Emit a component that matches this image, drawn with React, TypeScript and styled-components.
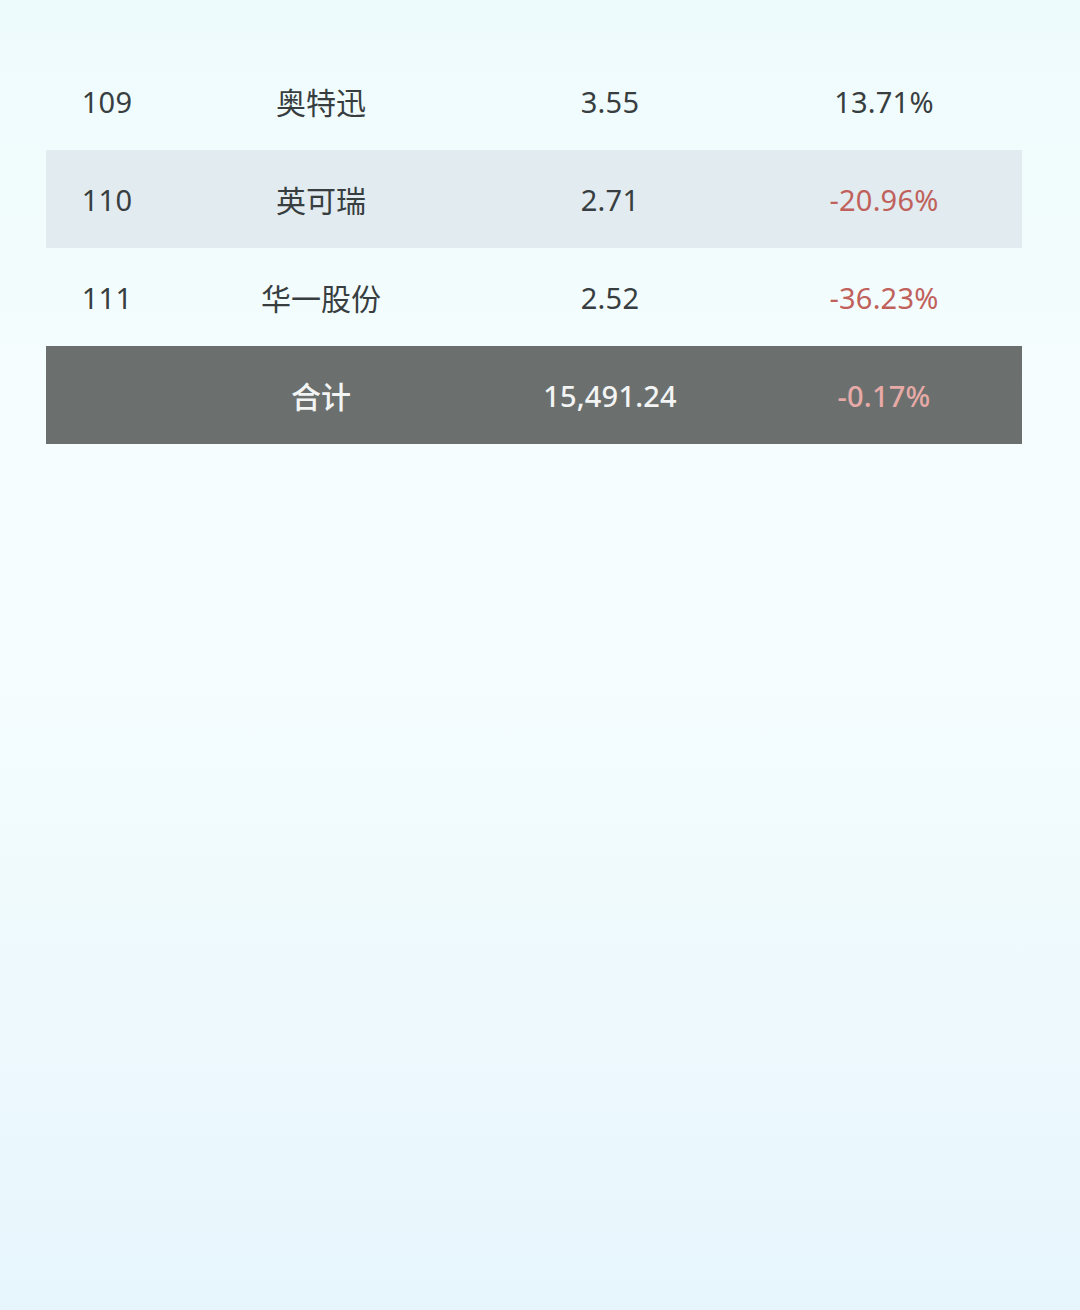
import React from "react";
import styled, { createGlobalStyle } from "styled-components";

const GlobalStyle = createGlobalStyle`
  html, body {
    margin: 0;
    padding: 0;
  }
  body {
    font-family: "Noto Sans", "Noto Sans CJK SC", sans-serif;
  }
`;

const Page = styled.div`
  width: 1080px;
  height: 1310px;
  box-sizing: border-box;
  padding: 52px 58px 0 46px;
  background: linear-gradient(
    180deg,
    #eefbfc 0%,
    #f5fdfe 30%,
    #f5fdfe 50%,
    #eef9fd 75%,
    #e7f6fd 100%
  );
`;

const Table = styled.div`
  width: 976px;
  display: flex;
  flex-direction: column;
`;

const Row = styled.div<{ variant?: "plain" | "stripe" | "total" }>`
  display: grid;
  grid-template-columns: 122px 306px 272px 276px;
  height: 98px;
  align-items: center;
  background: ${(props) =>
    props.variant === "stripe"
      ? "#e1ebf0"
      : props.variant === "total"
      ? "#6b706f"
      : "transparent"};
  color: ${(props) => (props.variant === "total" ? "#f3f4f4" : "#383e40")};
  font-weight: ${(props) => (props.variant === "total" ? 500 : 400)};
`;

const Cell = styled.div<{ tone?: "down" | "downLight"; han?: boolean }>`
  text-align: center;
  font-size: ${(props) => (props.han ? "30px" : "29px")};
  letter-spacing: ${(props) => (props.han ? "0" : "0.2px")};
  color: ${(props) =>
    props.tone === "down"
      ? "#c0615b"
      : props.tone === "downLight"
      ? "#e7aaa6"
      : "inherit"};
`;

interface IRowData {
  rank: string;
  name: string;
  value: string;
  change: string;
}

const rows: IRowData[] = [
  { rank: "109", name: "奥特迅", value: "3.55", change: "13.71%" },
  { rank: "110", name: "英可瑞", value: "2.71", change: "-20.96%" },
  { rank: "111", name: "华一股份", value: "2.52", change: "-36.23%" },
];

function App() {
  return (
    <>
      <GlobalStyle />
      <Page>
        <Table>
          {rows.map((row, i) => (
            <Row key={row.rank} variant={i % 2 === 1 ? "stripe" : "plain"}>
              <Cell>{row.rank}</Cell>
              <Cell han>{row.name}</Cell>
              <Cell>{row.value}</Cell>
              <Cell tone={row.change.startsWith("-") ? "down" : undefined}>
                {row.change}
              </Cell>
            </Row>
          ))}
          <Row variant="total">
            <Cell />
            <Cell han>合计</Cell>
            <Cell>15,491.24</Cell>
            <Cell tone="downLight">-0.17%</Cell>
          </Row>
        </Table>
      </Page>
    </>
  );
}

export default App;
